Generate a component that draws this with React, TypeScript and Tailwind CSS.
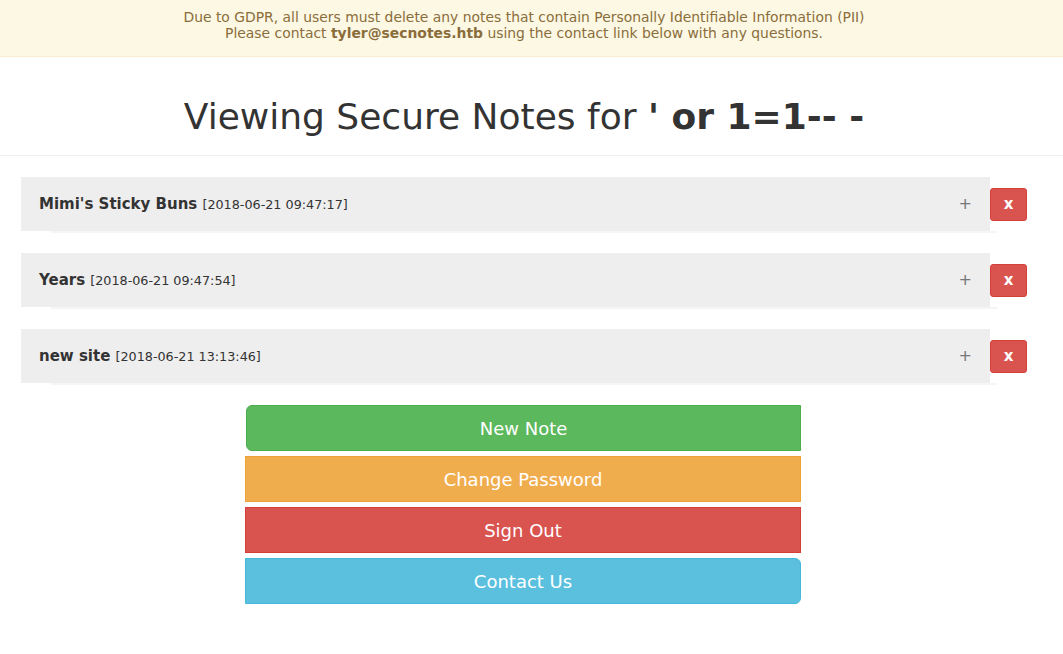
import React from 'react';

const notes = [
  { title: "Mimi's Sticky Buns", date: '2018-06-21 09:47:17' },
  { title: 'Years', date: '2018-06-21 09:47:54' },
  { title: 'new site', date: '2018-06-21 13:13:46' },
];

const NoteRow: React.FC<{ title: string; date: string }> = ({ title, date }) => (
  <div className="flex items-start">
    <div className="flex flex-1 flex-col">
      <div className="flex h-[54px] items-center justify-between bg-[#eeeeee] pl-[18px] pr-[18px]">
        <div className="text-[#333333]">
          <span className="text-[15px] font-bold">{title}</span>{' '}
          <span className="text-[12.75px]">[{date}]</span>
        </div>
        <span className="text-[16px] text-[#777777]">+</span>
      </div>
      <div className="ml-[30px] mr-[-7px] h-[2px] bg-[#f5f5f5]" />
    </div>
    <button className="mt-[11px] flex h-[33px] w-[37px] items-center justify-center rounded-[3px] border border-[#d43f3a] bg-[#d9534f] text-[15px] font-bold text-white">
      x
    </button>
  </div>
);

export default function App() {
  return (
    <div className="min-h-screen bg-white font-['DejaVu_Sans',sans-serif] text-[#333333]">
      {/* GDPR banner */}
      <div className="flex h-[57px] flex-col items-center justify-center border-b border-[#faebcc] bg-[#fcf8e3] pb-[6px] pr-[15px] text-[13.9px] leading-[16px] text-[#8a6d3b]">
        <p>Due to GDPR, all users must delete any notes that contain Personally Identifiable Information (PII)</p>
        <p>
          Please contact <strong>tyler@secnotes.htb</strong> using the contact link below with any questions.
        </p>
      </div>

      {/* Header */}
      <div className="flex h-[99px] items-center justify-center border-b border-[#eeeeee] pr-[15px] pt-[22px]">
        <h1 className="text-[36px] leading-none">
          Viewing Secure Notes for <strong>' or 1=1-- -</strong>
        </h1>
      </div>

      {/* Notes */}
      <div className="flex flex-col gap-[20px] pl-[21px] pr-[36px] pt-[21px]">
        {notes.map((n) => (
          <NoteRow key={n.title} title={n.title} date={n.date} />
        ))}
      </div>

      {/* Actions */}
      <div className="pr-[17px]">
        <div className="mx-auto mt-[20px] flex w-[556px] flex-col gap-[5px] text-[18px] text-white">
          <button className="ml-px h-[46px] rounded-l-[6px] border border-[#4cae4c] bg-[#5cb85c]">New Note</button>
          <button className="h-[46px] border border-[#eea236] bg-[#f0ad4e]">Change Password</button>
          <button className="h-[46px] border border-[#d43f3a] bg-[#d9534f]">Sign Out</button>
          <button className="h-[46px] rounded-r-[6px] border border-[#46b8da] bg-[#5bc0de]">Contact Us</button>
        </div>
      </div>
    </div>
  );
}
